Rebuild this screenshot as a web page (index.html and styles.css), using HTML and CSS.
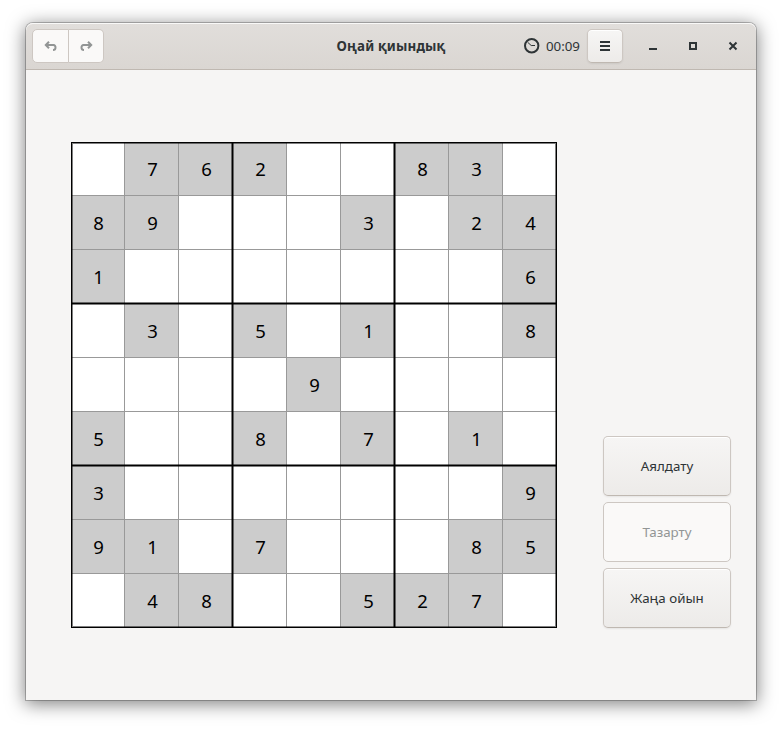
FILE: index.html
```
<!DOCTYPE html>
<html lang="kk">
<head>
<meta charset="utf-8">
<title>Оңай қиындық</title>
<link rel="stylesheet" href="styles.css">
</head>
<body>
<div class="window">
  <header class="bar">
    <div class="history">
      <button disabled><svg width="16" height="16" viewBox="0 0 16 16"><path d="M3 7h7.500a2.200 2.200 0 0 1 2 2.500c0 1.500-1 2.500-2.500 2.500M6 3.800L2.800 7 6 10.200"/></svg></button>
      <button disabled><svg width="16" height="16" viewBox="0 0 16 16"><path d="M13 7H5.500a2.200 2.200 0 0 0-2 2.500c0 1.500 1 2.500 2.500 2.500M10 3.800L13.200 7 10 10.200"/></svg></button>
    </div>
    <h1>Оңай қиындық</h1>
    <div class="tools">
      <svg class="clock" width="16" height="16" viewBox="0 0 16 16"><circle cx="7.700" cy="7.700" r="6.700"/><path d="M3.700 4.300L7.200 7.500H11"/></svg>
      <span class="time">00:09</span>
      <button class="menu"><svg width="16" height="16" viewBox="0 0 16 16"><path d="M3 3h10v2H3zM3 7h10v2H3zM3 11h10v2H3z"/></svg></button>
      <div class="controls">
        <svg width="16" height="16" viewBox="0 0 16 16"><path d="M4 10h8v2H4z"/></svg>
        <svg width="16" height="16" viewBox="0 0 16 16"><path fill-rule="evenodd" d="M4 4h8v8H4zM6 6v4h4V6z"/></svg>
        <svg width="16" height="16" viewBox="0 0 16 16"><path class="cross" d="M4.500 4.500l7 7M11.500 4.500l-7 7"/></svg>
      </div>
    </div>
  </header>
  <main>
    <div class="board" id="board"></div>
    <div class="actions">
      <button>Аялдату</button>
      <button disabled>Тазарту</button>
      <button>Жаңа ойын</button>
    </div>
  </main>
</div>
<script src="board.js"></script>
</body>
</html>
```
FILE: board.js
```
const rows = [
  '.762..83.',
  '89...3.24',
  '1.......6',
  '.3.5.1..8',
  '....9....',
  '5..8.7.1.',
  '3.......9',
  '91.7...85',
  '.48..527.'
];
const board = document.getElementById('board');
for (const row of rows) {
  for (const value of row) {
    const cell = document.createElement('div');
    cell.className = value === '.' ? 'cell' : 'cell given';
    if (value !== '.') {
      const digit = document.createElement('span');
      digit.textContent = value;
      cell.append(digit);
    }
    board.append(cell);
  }
}
```
FILE: styles.css
```
* { box-sizing: border-box; }
body {
  margin: 0;
  padding: 23px 26px 29px;
  height: 729px;
  background: #fff;
  overflow: hidden;
  font: 13.333px "Noto Sans", sans-serif;
  color: #2e3436;
}
.window {
  width: 730px;
  height: 677px;
  background: #f6f5f4;
  border-radius: 7px 7px 0 0;
  box-shadow: 0 3px 18px 1px rgba(0, 0, 0, .5), 0 0 0 1px rgba(0, 0, 0, .23);
}
.bar {
  display: grid;
  grid-template-columns: 1fr auto 1fr;
  align-items: center;
  height: 47px;
  padding: 0 6px;
  border-bottom: 1px solid #bfb8b1;
  border-radius: 7px 7px 0 0;
  background: linear-gradient(#e1dedb, #dad6d2);
  box-shadow: inset 0 1px rgba(255, 255, 255, .8);
}
h1 { margin: 0; font-size: 13.333px; font-weight: 700; letter-spacing: .16px; }
button {
  display: flex;
  align-items: center;
  justify-content: center;
  margin: 0;
  padding: 0;
  font: inherit;
  color: #2e3436;
  border: 1px solid #cdc7c2;
  border-bottom-color: #bfb8b1;
  border-radius: 5px;
  background: linear-gradient(#f6f5f4 2px, #edebe9);
  box-shadow: inset 0 1px #fff, 0 1px 2px rgba(0, 0, 0, .07);
}
button:disabled {
  color: #929595;
  background: #faf9f8;
  border-color: #cdc7c2;
  box-shadow: none;
}
.history { display: flex; }
.history button { width: 36px; height: 34px; }
.history button:first-child { border-radius: 5px 0 0 5px; width: 37px; }
.history button:last-child { border-radius: 0 5px 5px 0; border-left: 0; width: 35px; }
.history path { fill: none; stroke: #929595; stroke-width: 2; }
.tools { display: flex; align-items: center; justify-content: flex-end; }
.clock { margin-right: 6px; fill: none; stroke: #2e3436; stroke-width: 2; }
.clock path { stroke-width: 1; }
.time { margin-right: 7px; }
.menu { width: 36px; height: 34px; }
svg { fill: #2e3436; }
.controls { display: flex; gap: 24px; padding: 0 9px 0 22px; }
.cross { stroke: #2e3436; stroke-width: 2; }
main {
  display: flex;
  justify-content: space-between;
  align-items: flex-end;
  height: 630px;
  padding: 0 25px 72px 45px;
}
.board {
  position: relative;
  display: grid;
  grid-template-columns: repeat(9, 54px);
  grid-template-rows: repeat(9, 54px);
  width: 486px;
  height: 486px;
  background: #fff;
}
.cell {
  display: flex;
  align-items: center;
  justify-content: center;
  border-right: 1px solid #999;
  border-bottom: 1px solid #999;
  padding-left: 2px;
  font-size: 18.500px;
  color: #000;
}
.given { background: #ccc; }
.board::after {
  content: "";
  position: absolute;
  inset: 0;
  --rule: rgba(0, 0, 0, .5) 1px, #000 1px 2px, rgba(0, 0, 0, .5) 2px;
  border: 1px solid #000;
  box-shadow: inset 0 0 0 1px rgba(0, 0, 0, .5);
  background:
    linear-gradient(90deg, var(--rule)) 159px 0 / 3px 100% no-repeat,
    linear-gradient(90deg, var(--rule)) 321px 0 / 3px 100% no-repeat,
    linear-gradient(var(--rule)) 0 159px / 100% 3px no-repeat,
    linear-gradient(var(--rule)) 0 321px / 100% 3px no-repeat;
}
.actions { display: flex; flex-direction: column; gap: 6px; }
.actions button { width: 128px; height: 60px; }
```
